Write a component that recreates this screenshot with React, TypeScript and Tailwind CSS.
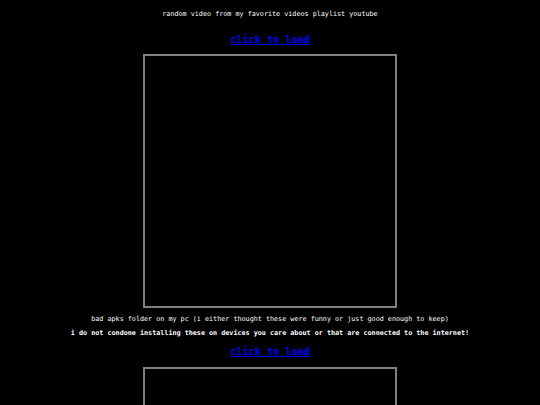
export default function App() {
  return (
    <div className="min-h-[405px] bg-black text-white text-center flex flex-col items-center antialiased" style={{ fontFamily: '"DejaVu Sans Mono", monospace' }}>
      <p className="mt-[10px] text-[6.75px] leading-[8px]">random video from my favorite videos playlist youtube</p>
      <a href="#" className="mt-[16px] text-[10.2px] leading-[12px] font-bold text-[#0000ee] underline">click to load</a>
      <div className="mt-[8px] w-[254px] h-[254px] border-2 border-[#808080] shrink-0"></div>
      <p className="mt-[7px] text-[6.75px] leading-[8px]">bad apks folder on my pc (i either thought these were funny or just good enough to keep)</p>
      <p className="mt-[6px] text-[6.75px] leading-[8px] font-bold">i do not condone installing these on devices you care about or that are connected to the internet!</p>
      <a href="#" className="mt-[9px] text-[10.2px] leading-[12px] font-bold text-[#0000ee] underline">click to load</a>
      <div className="mt-[9px] w-[254px] h-[254px] border-2 border-[#808080] shrink-0"></div>
    </div>
  );
}
